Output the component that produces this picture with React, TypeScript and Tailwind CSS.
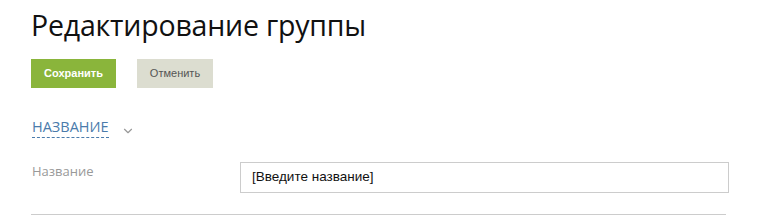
import { ChevronDown } from 'lucide-react';

export default function App() {
    return (
        <div className="w-[759px] h-[216px] overflow-hidden bg-white pl-[31px] pr-[30px] font-['Open_Sans',sans-serif]">
            {/* Title */}
            <h1 className="pt-[5px] text-[28.5px] leading-[40px] text-[#111] tracking-[-0.2px]">
                Редактирование группы
            </h1>

            {/* Actions */}
            <div className="flex gap-[21px] mt-[14px]">
                <button className="w-[85px] h-[29px] bg-[#8ab53b] text-white text-[11px] font-bold font-['Liberation_Sans',sans-serif]">
                    Сохранить
                </button>
                <button className="w-[76px] h-[29px] bg-[#dcddd0] text-[#555] text-[11px] font-['Liberation_Sans',sans-serif]">
                    Отменить
                </button>
            </div>

            {/* Section header */}
            <div className="flex items-center gap-[12px] mt-[29px] pl-px">
                <span className="text-[14.5px] leading-[20px] text-[#4a7bab] border-b border-dashed border-[#4a7bab]">
                    НАЗВАНИЕ
                </span>
                <ChevronDown size={14} strokeWidth={2} className="text-[#999] mt-[6px]" />
            </div>

            {/* Field */}
            <div className="flex mt-[24px] pb-[21px]">
                <label className="w-[209px] pl-px text-[13px] leading-[16px] text-[#999] pt-[1px]">Название</label>
                <div className="flex-1 h-[31px] border border-[#ccc] flex items-center pl-[11px] text-[13.5px] text-[#111] font-['Liberation_Sans',sans-serif]">
                    [Введите название]
                </div>
            </div>
            <div className="mr-[3px] border-b border-[#ccc]" />
        </div>
    );
}
